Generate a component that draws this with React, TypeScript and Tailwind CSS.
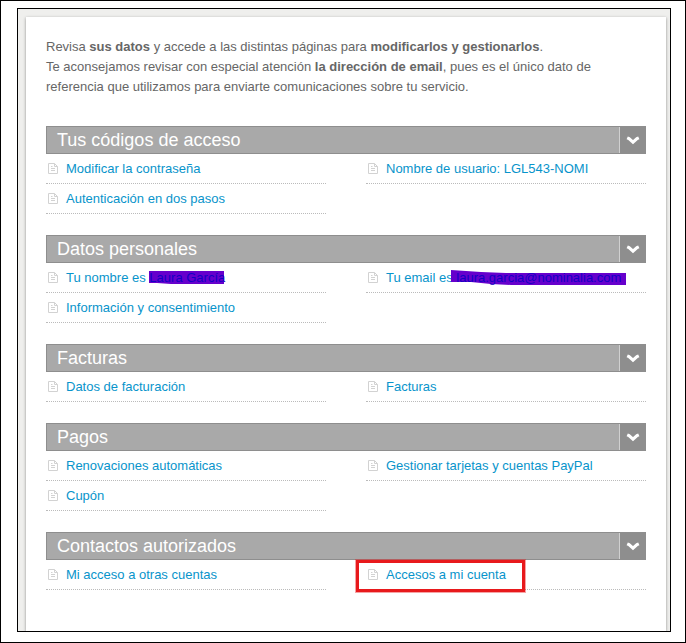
import React, { useState } from 'react';

interface Enlace {
  texto: string;
  tachado?: 'nombre' | 'email';
  valor?: string;
  resaltado?: boolean;
}

interface Seccion {
  titulo: string;
  enlaces: Enlace[];
}

const SECCIONES: Seccion[] = [
  {
    titulo: 'Tus códigos de acceso',
    enlaces: [
      { texto: 'Modificar la contraseña' },
      { texto: 'Nombre de usuario: LGL543-NOMI' },
      { texto: 'Autenticación en dos pasos' },
    ],
  },
  {
    titulo: 'Datos personales',
    enlaces: [
      { texto: 'Tu nombre es', tachado: 'nombre', valor: 'Laura García' },
      { texto: 'Tu email es', tachado: 'email', valor: 'laura.garcia@nominalia.com' },
      { texto: 'Información y consentimiento' },
    ],
  },
  {
    titulo: 'Facturas',
    enlaces: [{ texto: 'Datos de facturación' }, { texto: 'Facturas' }],
  },
  {
    titulo: 'Pagos',
    enlaces: [
      { texto: 'Renovaciones automáticas' },
      { texto: 'Gestionar tarjetas y cuentas PayPal' },
      { texto: 'Cupón' },
    ],
  },
  {
    titulo: 'Contactos autorizados',
    enlaces: [
      { texto: 'Mi acceso a otras cuentas' },
      { texto: 'Accesos a mi cuenta', resaltado: true },
    ],
  },
];

function IconoDocumento() {
  return (
    <svg width="10" height="11" viewBox="0 0 10 11" fill="none" stroke="#d2d2d2" className="shrink-0" aria-hidden="true">
      <path d="M0.5 0.5H6.5L9.5 3.5V10.5H0.5Z" />
      <path d="M6.5 0.5V3.5H9.5" />
      <path d="M3 3.5H4.5M3 5.5H7M3 7.5H7" />
    </svg>
  );
}

function IconoFlecha() {
  return (
    <svg width="14" height="9" viewBox="0 0 14 9" fill="none" stroke="#ffffff" strokeWidth="3" aria-hidden="true">
      <path d="M1.2 1.8L3 2.6L7 6.2L11 2.6L12.8 1.8" />
    </svg>
  );
}

// Trazo de rotulador sobre los datos privados
function Tachado({ tipo, valor }: { tipo: 'nombre' | 'email'; valor: string }) {
  return (
    <span className="relative text-[#1400c4]">
      {tipo === 'nombre' ? (
        <svg className="absolute left-0 top-px h-[13px] w-[75px]" viewBox="0 0 75 13" aria-hidden="true">
          <path d="M0 0H75V13H22L8 12H0Z" fill="#6600cc" />
        </svg>
      ) : (
        <svg className="absolute -left-[5px] top-0 h-[15px] w-[175px]" viewBox="0 0 175 15" aria-hidden="true">
          <path d="M0 0L30 2L55 3H175V15H60L40 14L20 12H0Z" fill="#6600cc" />
        </svg>
      )}
      <span className="relative">{valor}</span>
    </span>
  );
}

function FilaEnlace({ enlace }: { enlace: Enlace }) {
  return (
    <li className="relative border-b border-dotted border-[#bbbbbb]">
      <a href="#" className="flex h-[29px] items-center gap-2 pl-[2px] whitespace-nowrap text-[#0894cb]">
        <IconoDocumento />
        <span className="leading-4">
          {enlace.texto}
          {enlace.tachado && ' '}
          {enlace.tachado && <Tachado tipo={enlace.tachado} valor={enlace.valor ?? ''} />}
        </span>
      </a>
      {enlace.resaltado && (
        <span className="pointer-events-none absolute -left-[10px] top-0 h-8 w-[169px] border-3 border-[#e8191c] ring-1 ring-[#e8191c]/40" />
      )}
    </li>
  );
}

function Bloque({ seccion }: { seccion: Seccion }) {
  const [abierto, setAbierto] = useState(true);

  return (
    <section>
      <h2>
        <button
          type="button"
          aria-expanded={abierto}
          onClick={() => setAbierto(!abierto)}
          className="flex h-7 w-full items-stretch border border-[#8e8e8e] bg-[#a9a9a9] text-left text-lg text-white"
        >
          <span className="flex flex-1 items-center pl-[10px]">{seccion.titulo}</span>
          <span className="flex w-[26px] items-center justify-center border-l border-[#d0d0d0] bg-[#8e8e8e]">
            <IconoFlecha />
          </span>
        </button>
      </h2>
      {abierto && (
        <ul className="grid grid-cols-2 gap-x-10">
          {seccion.enlaces.map((e) => (
            <FilaEnlace key={e.texto} enlace={e} />
          ))}
        </ul>
      )}
    </section>
  );
}

export default function App() {
  return (
    <div className="flex min-h-screen flex-col border border-black bg-white pt-[7px] pr-[14px] pb-[10px] pl-4 font-['Liberation_Sans',Arial,sans-serif] text-[13px]">
      <div className="flex flex-1 flex-col overflow-hidden border border-black bg-[#efefed] pt-2 pr-1 pl-2">
        <main className="flex-1 bg-white px-5 pt-5 pb-10 shadow-[0_1px_3px_rgba(0,0,0,0.4)]">
          <div className="leading-5 text-[#666666]">
            <p>
              Revisa <strong>sus datos</strong> y accede a las distintas páginas para{' '}
              <strong>modificarlos y gestionarlos</strong>.
            </p>
            <p>
              Te aconsejamos revisar con especial atención <strong>la dirección de email</strong>, pues es el único dato
              de referencia que utilizamos para enviarte comunicaciones sobre tu servicio.
            </p>
          </div>
          <div className="mt-[29px] flex flex-col gap-[21px]">
            {SECCIONES.map((s) => (
              <Bloque key={s.titulo} seccion={s} />
            ))}
          </div>
        </main>
      </div>
    </div>
  );
}
